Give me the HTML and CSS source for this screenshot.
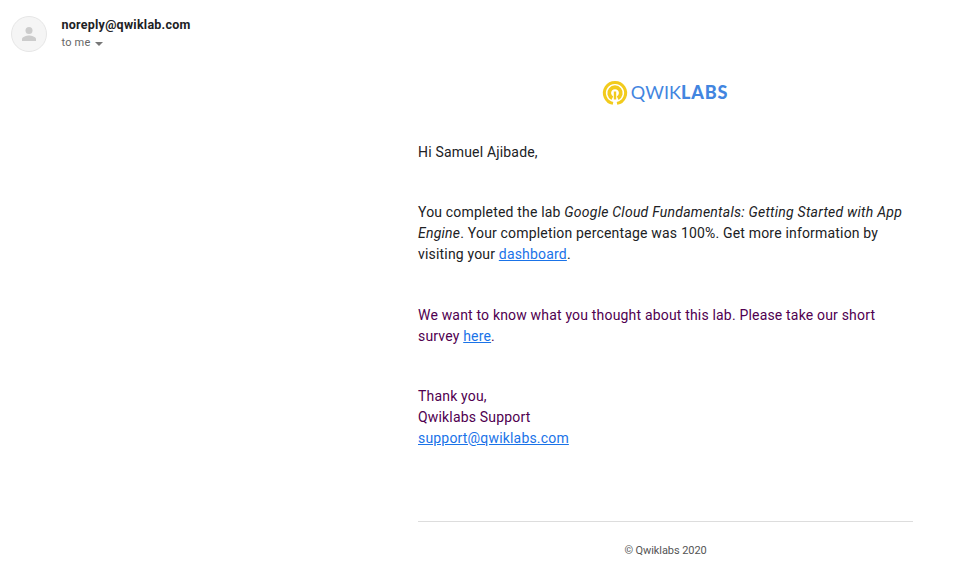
FILE: index.html
```html
<!DOCTYPE html>
<html lang="en">
<head>
<meta charset="utf-8">
<title>Qwiklabs</title>
<link rel="stylesheet" href="styles.css">
</head>
<body>
<header class="sender">
  <svg class="avatar" viewBox="0 0 36 36"><circle cx="18" cy="18" r="17.5" fill="#f5f5f5" stroke="#e6e6e6"/><circle cx="18" cy="14.5" r="3.5" fill="#ccc"/><path d="M11 25v-2c0-2.400 4.700-3.600 7-3.600s7 1.200 7 3.600v2z" fill="#ccc"/></svg>
  <div class="who">
    <div class="address">noreply@qwiklab.com</div>
    <div class="to">to me <span class="caret"></span></div>
  </div>
</header>
<main class="mail">
  <div class="logo">
    <svg class="mark" viewBox="0 0 24 24" fill="none" stroke="#f2cb1d"><path d="M10 22.400A10.600 10.600 0 1 1 14 22.400" stroke-width="3"/><path d="M9.300 17.200A5.800 5.800 0 1 1 14.700 17.200" stroke-width="3.800"/><path d="M12 10.500v8" stroke-width="2.400"/></svg>
    <span class="word">QWIK<b>LABS</b></span>
  </div>
  <p class="greeting">Hi Samuel Ajibade,</p>
  <p class="lab">You completed the lab <i>Google Cloud Fundamentals: Getting Started with App Engine</i>. Your completion percentage was 100%. Get more information by visiting your <a>dashboard</a>.</p>
  <p class="survey">We want to know what you thought about this lab. Please take our short survey <a>here</a>.</p>
  <p class="thanks">Thank you,<br>Qwiklabs Support<br><a>support@qwiklabs.com</a></p>
  <footer class="footer">© Qwiklabs 2020</footer>
</main>
</body>
</html>
```
FILE: styles.css
```css
body { margin: 0; background: #fff; font-family: Roboto, sans-serif; color: #202124; }
.sender { display: flex; gap: 14.5px; padding: 16px 0 0 11px; height: 36px; }
.avatar { width: 36px; height: 36px; }
.address { font-size: 12.5px; font-weight: 700; line-height: 17px; letter-spacing: .25px; }
.to { display: flex; align-items: center; font-size: 11px; line-height: 19px; color: #666; letter-spacing: .2px; }
.caret { margin: 2px 0 0 5px; border: 4px solid transparent; border-top-color: #777; border-bottom: 0; }
.mail { width: 495px; margin-left: 418px; padding-top: 28px; font-size: 14px; line-height: 21px; letter-spacing: .18px; }
.logo { display: flex; justify-content: center; align-items: center; gap: 4px; height: 26px; }
.mark { width: 24px; height: 24px; overflow: visible; }
.word { font: 18px/24px Lato, sans-serif; color: #4285e0; letter-spacing: .1px; margin-top: -2px; }
.word b { font-weight: 900; letter-spacing: .8px; }
i { letter-spacing: .24px; }
p { margin: 0; }
.greeting { margin-top: 36px; }
.lab { margin-top: 39px; }
.survey { margin-top: 40px; color: #500050; }
.thanks { margin-top: 39px; color: #500050; }
a { color: #1a73e8; text-decoration: underline; }
.footer { margin-top: 72px; border-top: 1px solid #ddd; padding-top: 18px; text-align: center; font-size: 11px; color: #555; letter-spacing: -.08px; }
```
